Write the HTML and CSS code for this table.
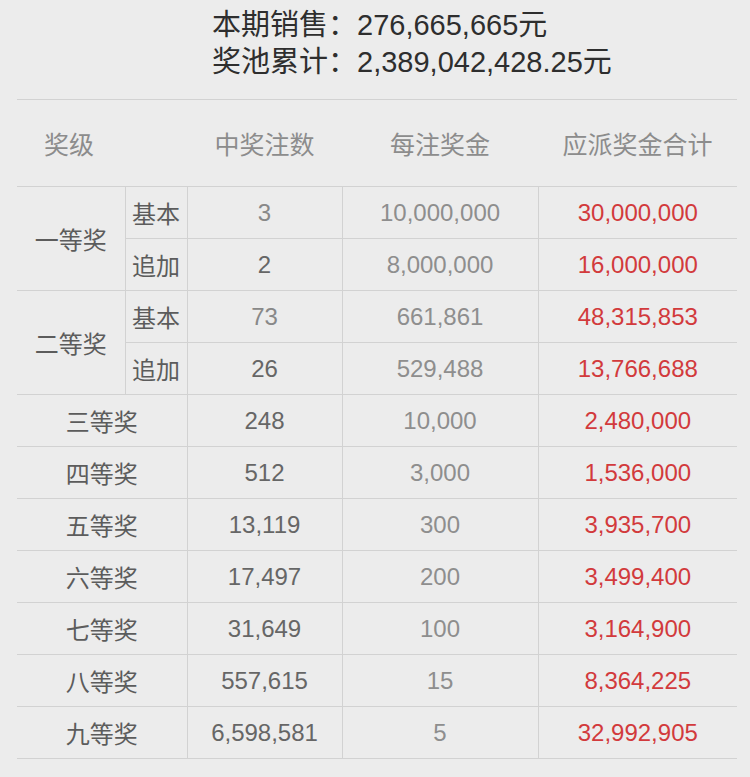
FILE: index.html
```html
<!DOCTYPE html>
<html lang="zh-CN">
<head>
<meta charset="utf-8">
<title>开奖详情</title>
<link rel="stylesheet" href="styles.css">
</head>
<body>
<div class="summary">
  <div class="summary-line">本期销售：<span class="num">276,665,665</span>元</div>
  <div class="summary-line">奖池累计：<span class="num">2,389,042,428.25</span>元</div>
</div>
<table class="prize">
  <colgroup>
    <col class="w-level"><col class="w-sub"><col class="w-count"><col class="w-per"><col class="w-total">
  </colgroup>
  <thead>
    <tr><th colspan="2">奖级</th><th>中奖注数</th><th>每注奖金</th><th>应派奖金合计</th></tr>
  </thead>
  <tbody>
    <tr><td rowspan="2" class="level">一等奖</td><td class="sub">基本</td><td class="count light">3</td><td class="per">10,000,000</td><td class="total">30,000,000</td></tr>
    <tr><td class="sub">追加</td><td class="count">2</td><td class="per">8,000,000</td><td class="total">16,000,000</td></tr>
    <tr><td rowspan="2" class="level">二等奖</td><td class="sub">基本</td><td class="count light">73</td><td class="per">661,861</td><td class="total">48,315,853</td></tr>
    <tr><td class="sub">追加</td><td class="count">26</td><td class="per">529,488</td><td class="total">13,766,688</td></tr>
    <tr><td colspan="2" class="level">三等奖</td><td class="count">248</td><td class="per">10,000</td><td class="total">2,480,000</td></tr>
    <tr><td colspan="2" class="level">四等奖</td><td class="count">512</td><td class="per">3,000</td><td class="total">1,536,000</td></tr>
    <tr><td colspan="2" class="level">五等奖</td><td class="count">13,119</td><td class="per">300</td><td class="total">3,935,700</td></tr>
    <tr><td colspan="2" class="level">六等奖</td><td class="count">17,497</td><td class="per">200</td><td class="total">3,499,400</td></tr>
    <tr><td colspan="2" class="level">七等奖</td><td class="count">31,649</td><td class="per">100</td><td class="total">3,164,900</td></tr>
    <tr><td colspan="2" class="level">八等奖</td><td class="count">557,615</td><td class="per">15</td><td class="total">8,364,225</td></tr>
    <tr><td colspan="2" class="level">九等奖</td><td class="count">6,598,581</td><td class="per">5</td><td class="total">32,992,905</td></tr>
  </tbody>
</table>
</body>
</html>
```

FILE: styles.css
```css
html, body {
  margin: 0;
  padding: 0;
  background: #ececec;
}

body {
  font-family: "Liberation Sans", "Noto Sans CJK SC", sans-serif;
  color: #333;
}

.summary {
  padding: 7px 0 0 212px;
  height: 99px;
  box-sizing: border-box;
}

.summary-line {
  font-size: 29px;
  line-height: 37px;
  color: #2e2e2e;
  white-space: nowrap;
}

.prize {
  margin-left: 17px;
  width: 720px;
  table-layout: fixed;
  border-collapse: collapse;
  font-size: 24px;
}

.w-level { width: 108px; }
.w-sub { width: 62px; }
.w-count { width: 155px; }
.w-per { width: 196px; }
.w-total { width: 199px; }

.prize thead th {
  height: 86px;
  padding: 0;
  font-weight: normal;
  font-size: 25px;
  color: #8c8c8c;
  text-align: center;
  vertical-align: middle;
  border-top: 1px solid #d2d2d2;
  border-bottom: 1px solid #d2d2d2;
}

.prize thead th:first-child {
  text-align: left;
  padding-left: 27px;
}

.prize tbody td {
  height: 51px;
  padding: 0;
  text-align: center;
  vertical-align: middle;
  border: 1px solid #d2d2d2;
  white-space: nowrap;
}

.prize tbody td:first-child {
  border-left: none;
}

.prize tbody td:last-child {
  border-right: none;
}

.prize tbody tr:nth-child(2) td:first-child,
.prize tbody tr:nth-child(4) td:first-child {
  border-left: 1px solid #d2d2d2;
}

.level {
  color: #5c5c5c;
}

.sub {
  color: #5c5c5c;
}

.count {
  color: #666;
}

.count.light {
  color: #888;
}

.per {
  color: #8e8e8e;
}

.total {
  color: #d23a3c;
}
```
